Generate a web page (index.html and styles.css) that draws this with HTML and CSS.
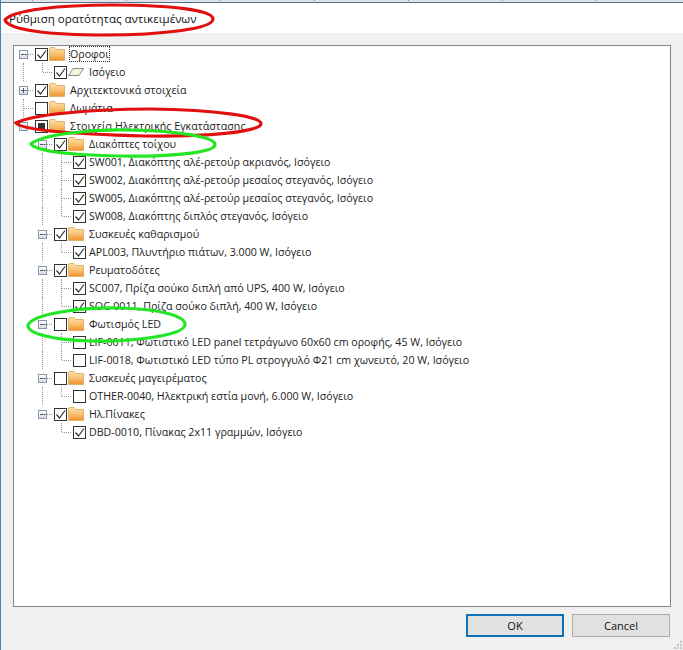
FILE: index.html
```html
<!DOCTYPE html>
<html lang="el">
<head>
<meta charset="utf-8">
<title>Ρύθμιση ορατότητας αντικειμένων</title>
<link rel="stylesheet" href="styles.css">
</head>
<body>
<svg width="0" height="0" class="defs">
  <defs>
    <linearGradient id="fg" x1="0" y1="0" x2="0" y2="1"><stop offset="0" stop-color="#fde0ae"/><stop offset="0.5" stop-color="#f9c274"/><stop offset="1" stop-color="#ee9428"/></linearGradient>
    <symbol id="folder" viewBox="0 0 16 14"><path d="M0.5 2 Q0.5 0.5 2 0.5 H5.5 Q6.5 0.5 7 1.5 L7.5 2.5 H15.5 V13.5 H0.5 Z" fill="url(#fg)" stroke="#e2b06c" stroke-width="1"/></symbol>
    <symbol id="floor" viewBox="0 0 16 14"><path d="M5 3.5 H15.5 L11 10.5 H0.5 Z" fill="#f8f3da" stroke="#8a8a80" stroke-width="1"/></symbol>
    <symbol id="tick" viewBox="0 0 13 13"><path d="M2.5 6.5 L5.5 10 L11 2.5" fill="none" stroke="#333" stroke-width="1.2"/></symbol>
  </defs>
</svg>
<div class="window">
  <div class="topstrip"><i></i><i></i><i></i><i></i><i></i><i></i><i></i></div>
  <header class="titlebar">Ρύθμιση ορατότητας αντικειμένων</header>
  <main class="content">
    <div class="tree">
      <div class="row"><span class="cell exp minus first"></span><span class="cb on"><svg><use href="#tick"/></svg></span><svg class="ic"><use href="#folder"/></svg><span class="label focus">Οροφοι</span></div>
      <div class="row"><span class="cell v"></span><span class="cell l"></span><span class="cb on"><svg><use href="#tick"/></svg></span><svg class="ic"><use href="#floor"/></svg><span class="label">Ισόγειο</span></div>
      <div class="row"><span class="cell exp plus mid"></span><span class="cb on"><svg><use href="#tick"/></svg></span><svg class="ic"><use href="#folder"/></svg><span class="label">Αρχιτεκτονικά στοιχεία</span></div>
      <div class="row"><span class="cell t"></span><span class="cb"></span><svg class="ic"><use href="#folder"/></svg><span class="label">Δωμάτια</span></div>
      <div class="row"><span class="cell exp minus last"></span><span class="cb part"></span><svg class="ic"><use href="#folder"/></svg><span class="label">Στοιχεία Ηλεκτρικής Εγκατάστασης</span></div>

      <div class="row"><span class="cell"></span><span class="cell exp minus mid"></span><span class="cb on"><svg><use href="#tick"/></svg></span><svg class="ic"><use href="#folder"/></svg><span class="label">Διακόπτες τοίχου</span></div>
      <div class="row"><span class="cell"></span><span class="cell v"></span><span class="cell t"></span><span class="cb on"><svg><use href="#tick"/></svg></span><span class="label item">SW001, Διακόπτης αλέ-ρετούρ ακριανός, Ισόγειο</span></div>
      <div class="row"><span class="cell"></span><span class="cell v"></span><span class="cell t"></span><span class="cb on"><svg><use href="#tick"/></svg></span><span class="label item">SW002, Διακόπτης αλέ-ρετούρ μεσαίος στεγανός, Ισόγειο</span></div>
      <div class="row"><span class="cell"></span><span class="cell v"></span><span class="cell t"></span><span class="cb on"><svg><use href="#tick"/></svg></span><span class="label item">SW005, Διακόπτης αλέ-ρετούρ μεσαίος στεγανός, Ισόγειο</span></div>
      <div class="row"><span class="cell"></span><span class="cell v"></span><span class="cell l"></span><span class="cb on"><svg><use href="#tick"/></svg></span><span class="label item">SW008, Διακόπτης διπλός στεγανός, Ισόγειο</span></div>

      <div class="row"><span class="cell"></span><span class="cell exp minus mid"></span><span class="cb on"><svg><use href="#tick"/></svg></span><svg class="ic"><use href="#folder"/></svg><span class="label">Συσκευές καθαρισμού</span></div>
      <div class="row"><span class="cell"></span><span class="cell v"></span><span class="cell l"></span><span class="cb on"><svg><use href="#tick"/></svg></span><span class="label item">APL003, Πλυντήριο πιάτων, 3.000 W, Ισόγειο</span></div>

      <div class="row"><span class="cell"></span><span class="cell exp minus mid"></span><span class="cb on"><svg><use href="#tick"/></svg></span><svg class="ic"><use href="#folder"/></svg><span class="label">Ρευματοδότες</span></div>
      <div class="row"><span class="cell"></span><span class="cell v"></span><span class="cell t"></span><span class="cb on"><svg><use href="#tick"/></svg></span><span class="label item">SC007, Πρίζα σούκο διπλή από UPS, 400 W, Ισόγειο</span></div>
      <div class="row"><span class="cell"></span><span class="cell v"></span><span class="cell l"></span><span class="cb on"><svg><use href="#tick"/></svg></span><span class="label item">SOC-0011, Πρίζα σούκο διπλή, 400 W, Ισόγειο</span></div>

      <div class="row"><span class="cell"></span><span class="cell exp minus mid"></span><span class="cb"></span><svg class="ic"><use href="#folder"/></svg><span class="label">Φωτισμός LED</span></div>
      <div class="row"><span class="cell"></span><span class="cell v"></span><span class="cell t"></span><span class="cb"></span><span class="label item">LIF-0011, Φωτιστικό LED panel τετράγωνο 60x60 cm οροφής, 45 W, Ισόγειο</span></div>
      <div class="row"><span class="cell"></span><span class="cell v"></span><span class="cell l"></span><span class="cb"></span><span class="label item">LIF-0018, Φωτιστικό LED τύπο PL στρογγυλό Φ21 cm χωνευτό, 20 W, Ισόγειο</span></div>

      <div class="row"><span class="cell"></span><span class="cell exp minus mid"></span><span class="cb"></span><svg class="ic"><use href="#folder"/></svg><span class="label">Συσκευές μαγειρέματος</span></div>
      <div class="row"><span class="cell"></span><span class="cell v"></span><span class="cell l"></span><span class="cb"></span><span class="label item">OTHER-0040, Ηλεκτρική εστία μονή, 6.000 W, Ισόγειο</span></div>

      <div class="row"><span class="cell"></span><span class="cell exp minus last"></span><span class="cb on"><svg><use href="#tick"/></svg></span><svg class="ic"><use href="#folder"/></svg><span class="label">Ηλ.Πίνακες</span></div>
      <div class="row"><span class="cell"></span><span class="cell"></span><span class="cell l"></span><span class="cb on"><svg><use href="#tick"/></svg></span><span class="label item">DBD-0010, Πίνακας 2x11 γραμμών, Ισόγειο</span></div>
    </div>
    <footer class="actions">
      <button class="btn primary">OK</button>
      <button class="btn">Cancel</button>
    </footer>
    <svg class="grip" width="9" height="9" viewBox="0 0 9 9"><path d="M7 1h2v2H7zM4 4h2v2H4zM7 4h2v2H7zM1 7h2v2H1zM4 7h2v2H4zM7 7h2v2H7z" fill="#c4c4c4"/></svg>
  </main>
  <svg class="marks" width="683" height="650" viewBox="0 0 683 650">
    <path class="red" d="M5 20 C12 10 60 5 112 5 C170 5 213 10 213 19 C213 29 160 35 105 35 C50 35 8 30 5 20 Z"/>
    <path class="red" d="M16 123 C30 115 90 109 150 109 C215 110 262 116 261 124 C260 132 205 137 145 136 C70 134 22 130 16 123 Z"/>
    <path class="green" d="M31 144 C40 135 90 129 128 130 C180 131 216 137 215 145 C214 153 165 157 120 156 C70 155 35 151 31 144 Z"/>
    <path class="green" d="M28 325 C33 314 80 307 120 308 C160 309 186 316 185 325 C183 336 130 342 90 341 C55 340 27 334 28 325 Z"/>
  </svg>
</div>
</body>
</html>
```
FILE: styles.css
```css
* { box-sizing: border-box; }
html, body { margin: 0; padding: 0; }
body { width: 683px; height: 650px; overflow: hidden; background: #f0f0f0; font-family: "Open Sans", "Noto Sans", sans-serif; font-size: 10.67px; color: #222; }
.defs { position: absolute; }
.window { position: relative; width: 683px; height: 650px; display: flex; flex-direction: column; border-left: 1px solid #3a86b0; }
.topstrip { height: 3px; background: #dfe2ea; border-bottom: 1px solid #54718a; display: flex; flex: none; padding-left: 0; }
.topstrip i { width: 94px; height: 3px; border-right: 1px solid #a8a8ac; }
.topstrip i:first-child { width: 32px; }
.titlebar { height: 30px; flex: none; background: #fff; display: flex; align-items: center; padding: 0 0 0 8px; font-size: 11.5px; color: #111; }
.content { position: relative; flex: 1; display: flex; flex-direction: column; padding: 12px 12px 0 12px; background: #f0f0f0; }
.tree { height: 562px; flex: none; background: #fff; border: 1px solid #828790; }
.row { height: 18px; display: flex; align-items: center; white-space: nowrap; }
.row:first-child { margin-top: -1px; }
.cell { position: relative; width: 19px; height: 18px; flex: none; }
.v::before, .t::before, .l::before, .first::before, .mid::before, .last::before { content: ""; position: absolute; left: 9px; width: 0; border-left: 1px dotted #999; }
.v::before, .t::before, .mid::before { top: 0; bottom: 0; }
.l::before, .last::before { top: 0; height: 9px; }
.first::before { top: 9px; bottom: 0; }
.t::after, .l::after, .exp::after { content: ""; position: absolute; left: 10px; top: 9px; width: 9px; border-top: 1px dotted #999; }
.exp { background-repeat: no-repeat; }
.minus { background-image: linear-gradient(#4a5a68, #4a5a68), linear-gradient(#fff, #d5dbe3), linear-gradient(#8a97a5, #8a97a5); background-size: 5px 1px, 7px 7px, 9px 9px; background-position: 7px 9px, 6px 6px, 5px 5px; }
.plus { background-image: linear-gradient(#4a5a68, #4a5a68), linear-gradient(#4a5a68, #4a5a68), linear-gradient(#fff, #d5dbe3), linear-gradient(#8a97a5, #8a97a5); background-size: 5px 1px, 1px 5px, 7px 7px, 9px 9px; background-position: 7px 9px, 9px 7px, 6px 6px, 5px 5px; }
.exp::before { z-index: -1; }
.cb { width: 13px; height: 13px; flex: none; margin-left: 2px; background: #fff; border: 1px solid #333; position: relative; z-index: 1; }
.cb svg { position: absolute; left: -1px; top: -1px; width: 13px; height: 13px; display: block; }
.part::after { content: ""; position: absolute; left: 2px; top: 2px; width: 7px; height: 7px; background: #333; }
.ic { width: 16px; height: 14px; flex: none; margin-left: 1px; display: block; }
.label { margin-left: 4px; padding: 0 1px; line-height: 16px; color: #222; }
.item { margin-left: 2px; }
.focus { outline: 1px dotted #333; outline-offset: -1px; }
.actions { display: flex; justify-content: flex-end; gap: 8px; padding: 7px 1px 0 0; }
.btn { width: 98px; height: 23px; background: #e1e1e1; border: 1px solid #adadad; font-family: inherit; font-size: 11px; color: #111; padding: 0; }
.primary { border: 2px solid #0f71b5; }
.grip { position: absolute; right: 1px; bottom: 1px; }
.marks { position: absolute; left: -1px; top: 0; pointer-events: none; z-index: 2; }
.marks path { fill: none; stroke-width: 3.2; }
.red { stroke: #e01010; }
.green { stroke: #22e622; }
```
